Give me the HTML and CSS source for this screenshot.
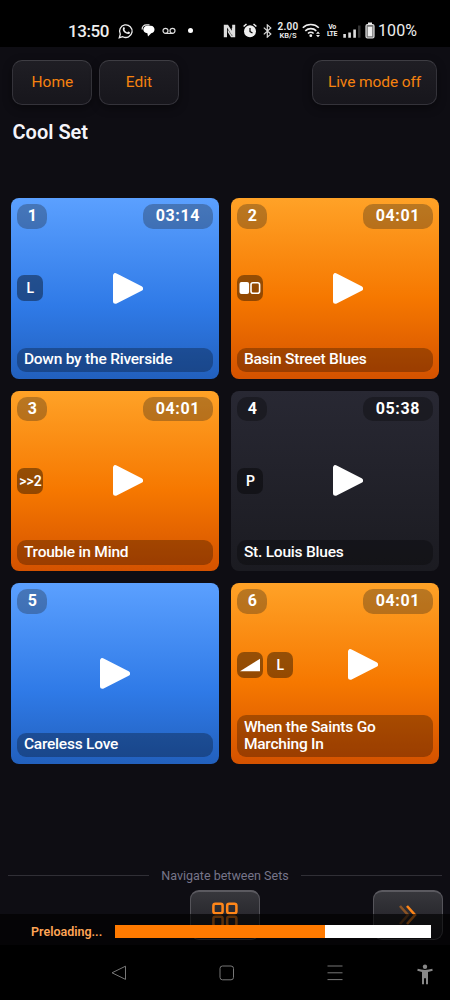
FILE: index.html
```html
<!DOCTYPE html>
<html lang="en">
<head>
<meta charset="utf-8">
<title>Cool Set</title>
<link rel="stylesheet" href="styles.css">
</head>
<body>
<div class="phone">
  <div class="status">
    <span class="clock">13:50</span>
    <svg class="ic-chat" width="16" height="16" viewBox="0 0 16 16"><path d="M1.3 14.7l1-3.5A6.3 6.3 0 1 1 4.8 13.7z" fill="none" stroke="#eee" stroke-width="1.3"/><path d="M5.3 4.4c.7-.6 1.1-.3 1.5.9.3.9-.4 1-.4 1.5.6 1.3 1.3 2 2.7 2.6.5 0 .8-1 1.3-.9 1.7.7 1.8.9 1.4 1.7-.7 1.2-2.3 1.1-4.1.1C5.4 9 4 6.400 5.300 4.400z" fill="#eee"/></svg>
    <svg class="ic-bubble" width="14" height="13" viewBox="0 0 14 13"><path d="M1.200 5.500C.8 2.500 3 .9 5.500.9h3" fill="none" stroke="#eee" stroke-width="1.200"/><path d="M6.500 1.800h3.200c5 0 5 7.200.5 7.500L7 12.500l-.6-3.200C.9 9 1 2 6.500 1.800z" fill="#fff"/></svg>
    <svg class="ic-voice" width="14" height="8" viewBox="0 0 14 8"><g fill="none" stroke="#ddd" stroke-width="1.200"><circle cx="3.500" cy="3.800" r="2.500"/><circle cx="10.500" cy="3.800" r="2.500"/><path d="M3.500 6.400h7"/></g></svg>
    <span class="dot"></span>
    <svg class="ic-nfc" width="13" height="14" viewBox="0 0 13 14"><path d="M.8.8h4.200l3.800 6V4h1.400v6.800H8.500L4 3.500v9.700H.8zM12.200 13.200H8l-3.200-5V5.500l4.400 6.700V.8h3z" fill="#ddd"/></svg>
    <svg class="ic-alarm" width="14" height="15" viewBox="0 0 14 15"><circle cx="7" cy="8.300" r="6" fill="#eee"/><path d="M.6 3.500L3.500 1M13.400 3.500L10.500 1" stroke="#eee" stroke-width="1.500"/><path d="M7 5v3.600l2.500 1.500" fill="none" stroke="#000" stroke-width="1.200"/></svg>
    <svg class="ic-bt" width="9" height="14" viewBox="0 0 9 14"><path d="M.8 3.600l7 6.500-3.500 3V.9l3.500 3-7 6.500" fill="none" stroke="#ddd" stroke-width="1.200"/></svg>
    <span class="speed"><b>2.00</b><i>KB/S</i></span>
    <svg class="ic-wifi" width="19" height="15" viewBox="0 0 19 15"><g fill="none" stroke="#eee" stroke-width="1.600"><path d="M.8 4.800a11.500 11.500 0 0 1 16 0M3.300 7.800a8 8 0 0 1 11 0M6 10.500a4 4 0 0 1 5.600 0"/></g><circle cx="8.800" cy="12.700" r="1.400" fill="#eee"/><path d="M14 10.800l2-2.200 2 2.200zM14 12l2 2.200L18 12z" fill="#eee"/></svg>
    <span class="volte"><b>Vo</b><b>LTE</b></span>
    <svg class="ic-signal" width="18" height="13" viewBox="0 0 18 13"><g fill="#ddd"><path d="M.3 9h2.600v3.700H.3zM5.300 7.500h2.600v5.200H5.300zM10.300 4.500h2.600v8.200h-2.600z"/><path fill="#333" d="M15 .5h2.500v12.200H15z"/></g></svg>
    <svg class="ic-batt" width="10" height="17" viewBox="0 0 10 17"><rect x="1" y="2.500" width="8" height="13.500" rx="1.500" fill="#777" stroke="#ddd" stroke-width="1.200"/><path d="M3 .5h4v2H3zM2.800 4.800h4.400v9.500H2.800z" fill="#eee"/></svg>
    <span class="percent">100%</span>
  </div>

  <main class="app">
    <div class="toolbar">
      <div class="btn">Home</div>
      <div class="btn">Edit</div>
      <div class="btn live">Live mode off</div>
    </div>
    <h1 class="title">Cool Set</h1>

    <div class="grid">
      <section class="card blue">
        <div class="row"><span class="pill">1</span><span class="pill time">03:14</span></div>
        <div class="mid"><span class="tag">L</span><div class="play"><svg width="30" height="31" viewBox="0 0 30 31"><path class="tri" d="M2.500 2.700v25.600L27.500 15.500z"/></svg></div></div>
        <div class="name">Down by the Riverside</div>
      </section>
      <section class="card orange">
        <div class="row"><span class="pill">2</span><span class="pill time">04:01</span></div>
        <div class="mid"><span class="tag"><svg width="22" height="14" viewBox="0 0 22 14"><rect x=".5" y="1" width="9.600" height="12" rx="2" fill="#fff"/><rect x="12" y="1.800" width="8.600" height="10.500" rx="2" fill="none" stroke="#fff" stroke-width="1.600"/></svg></span><div class="play"><svg width="30" height="31" viewBox="0 0 30 31"><path class="tri" d="M2.500 2.700v25.600L27.500 15.500z"/></svg></div></div>
        <div class="name">Basin Street Blues</div>
      </section>
      <section class="card orange">
        <div class="row"><span class="pill">3</span><span class="pill time">04:01</span></div>
        <div class="mid"><span class="tag">&gt;&gt;2</span><div class="play"><svg width="30" height="31" viewBox="0 0 30 31"><path class="tri" d="M2.500 2.700v25.600L27.500 15.500z"/></svg></div></div>
        <div class="name">Trouble in Mind</div>
      </section>
      <section class="card dark">
        <div class="row"><span class="pill">4</span><span class="pill time">05:38</span></div>
        <div class="mid"><span class="tag">P</span><div class="play"><svg width="30" height="31" viewBox="0 0 30 31"><path class="tri" d="M2.500 2.700v25.600L27.500 15.500z"/></svg></div></div>
        <div class="name">St. Louis Blues</div>
      </section>
      <section class="card blue">
        <div class="row"><span class="pill">5</span></div>
        <div class="mid"><div class="play"><svg width="30" height="31" viewBox="0 0 30 31"><path class="tri" d="M2.500 2.700v25.600L27.500 15.500z"/></svg></div></div>
        <div class="name">Careless Love</div>
      </section>
      <section class="card orange">
        <div class="row"><span class="pill">6</span><span class="pill time">04:01</span></div>
        <div class="mid"><span class="tag"><svg width="22" height="14" viewBox="0 0 22 14"><path d="M1 13.200L21 .8v12.400z" fill="#fff"/></svg></span><span class="tag">L</span><div class="play"><svg width="30" height="31" viewBox="0 0 30 31"><path class="tri" d="M2.500 2.700v25.600L27.500 15.500z"/></svg></div></div>
        <div class="name">When the Saints Go<br>Marching In</div>
      </section>
    </div>

    <div class="divider"><span>Navigate between Sets</span></div>
    <div class="sets">
      <div class="setbtn all"><svg width="26" height="26" viewBox="0 0 26 26"><g fill="none" stroke="#ff8619" stroke-width="2.500"><rect x="1.400" y="1.800" width="9.200" height="9.400" rx="2"/><rect x="15.200" y="1.800" width="9.200" height="9.400" rx="2"/><rect x="1.400" y="14.800" width="9.200" height="9.400" rx="2"/><rect x="15.200" y="14.800" width="9.200" height="9.400" rx="2"/></g></svg></div>
      <div class="setbtn next"><svg width="18" height="20" viewBox="0 0 18 20"><g fill="none" stroke="#ff8619" stroke-width="2.600"><path d="M1 1l8 9-8 9" opacity=".45"/><path d="M8 1l8 9-8 9"/></g></svg></div>
    </div>
  </main>

  <div class="preload"><span class="loading">Preloading...</span><div class="track"><div class="fill"></div></div></div>

  <div class="sysnav">
    <svg class="back" width="16" height="16" viewBox="0 0 16 16"><path d="M14.500 1.200v13.200L1 7.800z"/></svg>
    <svg class="homekey" width="16" height="16" viewBox="0 0 16 16"><rect x="1" y="1" width="13.500" height="13.800" rx="2.500"/></svg>
    <svg class="menu" width="16" height="16" viewBox="0 0 16 16"><path d="M.5 1h15M.5 7.800h15M.5 14.600h15"/></svg>
    <svg class="person" width="16" height="21" viewBox="0 0 16 21"><circle cx="8" cy="2.700" r="2.200"/><path d="M.7 4.800c4.500 1.500 10 1.500 14.600 0l.4 2-4.700 1.200v12.300H9v-6H7v6H5V8L.3 6.800z"/></svg>
  </div>
</div>
</body>
</html>
```

FILE: styles.css
```css
* { box-sizing: border-box; }
body { margin: 0; background: #000; font-family: Roboto, "Liberation Sans", sans-serif; }
svg { display: block; flex: none; }
.phone { width: 450px; height: 1000px; position: relative; display: flex; flex-direction: column; overflow: hidden; background: #000; }

.status { height: 47px; flex: none; display: flex; align-items: center; padding: 14px 0 0 68px; color: #eee; }
.clock { font-size: 17px; font-weight: 500; width: 50px; letter-spacing: -.4px; white-space: nowrap; }
.percent { font-size: 16px; letter-spacing: .1px; margin-left: 3px; }
.ic-bubble { margin-left: 7px; }
.ic-voice { margin-left: 7px; }
.dot { width: 5px; height: 5px; border-radius: 50%; background: #fff; margin-left: 12px; }
.ic-nfc { margin-left: 30px; }
.ic-alarm { margin-left: 7px; }
.ic-bt { margin-left: 6px; }
.speed { width: 22px; margin-left: 5px; display: flex; flex-direction: column; align-items: center; }
.speed b { font-size: 10px; letter-spacing: .2px; font-weight: 600; line-height: 10px; }
.speed i { font-size: 7.500px; font-style: normal; font-weight: 600; line-height: 8px; }
.ic-wifi { margin-left: 3px; }
.volte { width: 12px; margin-left: 5px; display: flex; flex-direction: column; align-items: center; line-height: 7px; font-size: 7px; letter-spacing: -.5px; }
.ic-signal { margin: 1px 0 0 5px; }
.ic-batt { margin-left: 4px; margin-top: -1px; }

.app { height: 898px; flex: none; background: #0e0d13; padding-top: 13px; }
.toolbar { display: flex; gap: 6.500px; padding: 0 13px 0 12.400px; }
.btn { width: 80px; height: 44.500px; border: 1px solid #34333a; border-top: 1.500px solid #3e3d43; border-radius: 10px; background: linear-gradient(#1f1e24, #17161c); color: #f6820f; font-size: 15.500px; line-height: 42px; text-align: center; box-shadow: 0 3px 10px rgba(0,0,0,.4); }
.live { width: 125px; margin-left: auto; letter-spacing: -.1px; }
.title { margin: 15.500px 0 0 12.500px; color: #f5f4fa; font-size: 20px; line-height: 24px; font-weight: 600; height: 78px; }

.grid { display: grid; grid-template-columns: 208px 208px; grid-auto-rows: 180.500px; gap: 12px; padding-left: 11px; }
.card { border-radius: 8px; padding: 6.400px; display: flex; flex-direction: column; color: #fff; }
.blue { background: linear-gradient(#5ba0ff 0%, #2f7ae7 60%, #2260bd 100%); }
.orange { background: linear-gradient(#ffa227 0%, #f67800 55%, #d45200 100%); }
.dark { background: linear-gradient(#282833, #1b1b21); }
.row { display: flex; justify-content: space-between; }
.pill { width: 30px; height: 24.500px; border-radius: 10px; background: rgba(25,25,25,.3); font-size: 16px; font-weight: 700; line-height: 24.500px; text-align: center; }
.dark .pill { background: rgba(15,15,19,.5); }
.time { width: 69.500px; letter-spacing: .6px; }
.mid { flex: 1; display: flex; align-items: center; }
.tag { width: 26px; height: 26px; flex: none; border-radius: 7px; background: rgba(0,0,0,.4); display: flex; align-items: center; justify-content: center; font-size: 14px; font-weight: 600; }
.tag + .tag { margin-left: 4px; }
.play { flex: 1; display: flex; justify-content: center; }
.tri { fill: #fff; stroke: #fff; stroke-width: 5; stroke-linejoin: round; }
.name { border-radius: 9px; background: rgba(0,0,0,.28); padding: 3.500px 6.500px; font-size: 15.500px; font-weight: 500; letter-spacing: -.22px; line-height: 17.500px; }

.divider { display: flex; align-items: center; gap: 12px; padding: 0 8px; margin-top: 103px; height: 18px; color: #77758a; font-size: 12.500px; }
.divider::before, .divider::after { content: ""; flex: 1; height: 1px; background: #302f36; }
.sets { display: flex; padding: 0 7.500px 0 190px; margin-top: 5px; justify-content: space-between; }
.setbtn { width: 70px; height: 50px; border: 1.500px solid #55545a; border-top: 2px solid #5b5a60; border-radius: 9px; background: linear-gradient(#37373c, #1c1b21); display: flex; justify-content: center; align-items: center; }

/* Overlay covering the lower edge of the app while tracks load */
.preload { position: absolute; left: 0; right: 0; top: 914px; height: 31px; background: rgba(0,0,0,.64); display: flex; align-items: center; padding: 4px 19px 0 31px; }
.loading { width: 84px; color: #ffa556; font-size: 12.500px; font-weight: 600; line-height: 14px; }
.track { flex: 1; height: 13px; background: #fff; }
.fill { width: 66.600%; height: 100%; background: #ff7a00; }

.sysnav { height: 55px; display: flex; padding: 19.500px 0 0 110.500px; fill: none; stroke: #777; stroke-width: 1; }
.homekey { margin-left: 92px; }
.menu { margin-left: 92px; }
.person { margin: -1px 0 0 74px; fill: #888; stroke: none; }
```
